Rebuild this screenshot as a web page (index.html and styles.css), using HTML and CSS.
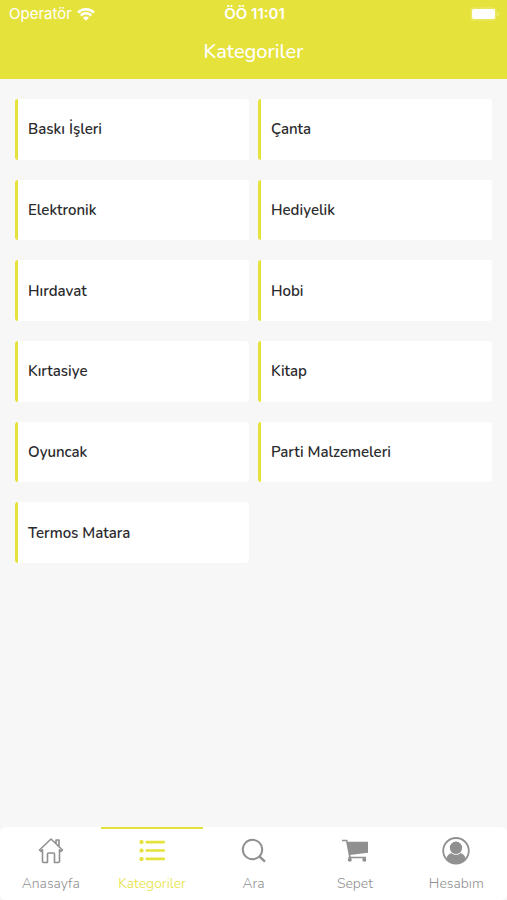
FILE: index.html
```html
<!DOCTYPE html>
<html lang="tr">
<head>
<meta charset="utf-8">
<meta name="viewport" content="width=device-width, initial-scale=1">
<title>Kategoriler</title>
<link rel="stylesheet" href="styles.css">
</head>
<body>
<header class="header">
  <div class="status">
    <div class="carrier">
      <span>Operatör</span>
      <svg class="wifi" viewBox="0 0 18 13" aria-hidden="true">
        <path d="M1 4.600a11.500 11.500 0 0 1 16 0M3.800 7.500a7.400 7.400 0 0 1 10.400 0" fill="none" stroke="currentColor" stroke-width="2.500"/>
        <path d="M9 12.800 5.900 9.800a4.400 4.400 0 0 1 6.200 0z" fill="currentColor"/>
      </svg>
    </div>
    <span class="clock">ÖÖ 11:01</span>
    <svg class="battery" viewBox="0 0 30 14" aria-hidden="true">
      <rect x="1" y="1" width="25" height="12" rx="3" fill="none" stroke="#fff" stroke-opacity=".3"/>
      <rect x="2" y="2" width="23" height="10" rx="2" fill="#fff"/>
      <path d="M27.500 5v4q1.500-.7 1.500-2t-1.500-2z" fill="#fff" fill-opacity=".4"/>
    </svg>
  </div>
  <h1 class="title">Kategoriler</h1>
</header>
<main class="grid">
  <a class="card" href="#">Baskı İşleri</a>
  <a class="card" href="#">Çanta</a>
  <a class="card" href="#">Elektronik</a>
  <a class="card" href="#">Hediyelik</a>
  <a class="card" href="#">Hırdavat</a>
  <a class="card" href="#">Hobi</a>
  <a class="card" href="#">Kırtasiye</a>
  <a class="card" href="#">Kitap</a>
  <a class="card" href="#">Oyuncak</a>
  <a class="card" href="#">Parti Malzemeleri</a>
  <a class="card" href="#">Termos Matara</a>
</main>
<nav class="tabs">
  <a class="tab" href="#">
    <svg class="icon" viewBox="0 0 28 28" fill="none" stroke="currentColor" stroke-width="1.600" stroke-linejoin="round" stroke-linecap="round" aria-hidden="true">
      <path d="M2.500 13 14 2l11.500 11-1.300 1.300-1.700-1.500V24.500a1 1 0 0 1-1 1h-4V17a1 1 0 0 0-1-1h-5a1 1 0 0 0-1 1v8.500h-4a1 1 0 0 1-1-1V12.800l-1.700 1.500zM19 6.800V3h3v6.500"/>
    </svg>
    <span>Anasayfa</span>
  </a>
  <a class="tab active" href="#" aria-current="page">
    <svg class="icon" viewBox="0 0 28 28" fill="currentColor" aria-hidden="true">
      <rect x="1.500" y="3" width="4" height="4" rx="1.500"/><rect x="1.500" y="11.500" width="4" height="4" rx="1.500"/><rect x="1.500" y="20" width="4" height="4" rx="1.500"/>
      <rect x="7.500" y="3.800" width="19.500" height="2.600" rx="1"/><rect x="7.500" y="12.200" width="19.500" height="2.600" rx="1"/><rect x="7.500" y="20.600" width="19.500" height="2.600" rx="1"/>
    </svg>
    <span>Kategoriler</span>
  </a>
  <a class="tab" href="#">
    <svg class="icon" viewBox="0 0 28 28" fill="none" stroke="currentColor" stroke-width="2" aria-hidden="true">
      <circle cx="13.500" cy="12.500" r="9.700"/><path d="m20.300 19.300 5.700 5.300" stroke-width="2.400"/>
    </svg>
    <span>Ara</span>
  </a>
  <a class="tab" href="#">
    <svg class="icon" viewBox="0 0 28 28" fill="currentColor" aria-hidden="true">
      <path d="M6 4.800H27v11L8.500 18z"/>
      <path d="M1 3.500h4.700l3.300 17M7.500 20.500h17.500" fill="none" stroke="currentColor" stroke-width="1.600"/>
      <circle cx="8.800" cy="22.800" r="2"/><circle cx="23.300" cy="22.800" r="2"/>
    </svg>
    <span>Sepet</span>
  </a>
  <a class="tab" href="#">
    <svg class="icon" viewBox="0 0 28 28" aria-hidden="true">
      <circle cx="14" cy="13.800" r="12.800" fill="none" stroke="currentColor" stroke-width="1.800"/>
      <circle cx="14" cy="10.800" r="6.200" fill="currentColor"/>
      <path d="M4.500 21.500q1-4.500 5-5.200 4.500 3 9 0 4 .7 5 5.200Q20 26.800 14 26.800T4.500 21.500z" fill="currentColor"/>
    </svg>
    <span>Hesabım</span>
  </a>
</nav>
</body>
</html>
```
FILE: styles.css
```css
* {
  box-sizing: border-box;
}

body {
  margin: 0;
  min-height: 100vh;
  display: flex;
  flex-direction: column;
  background: #f7f7f7;
  color: #2b2b2e;
  font-family: Nunito, Lato, "Noto Sans", sans-serif;
}

a {
  color: inherit;
  text-decoration: none;
}

.header {
  background: #e6e23c;
  color: #fff;
  padding-bottom: 13px;
}

.status {
  display: grid;
  grid-template-columns: 1fr auto 1fr;
  align-items: center;
  height: 28px;
  padding: 0 7px 0 9px;
  font: 15px/28px Inter, sans-serif;
}

.carrier {
  display: flex;
  align-items: center;
  gap: 5px;
}

.wifi {
  width: 18px;
  height: 13px;
}

.clock {
  font-weight: 600;
}

.battery {
  width: 30px;
  height: 14px;
  justify-self: end;
}

.title {
  margin: 0;
  padding-top: 10px;
  font-size: 20px;
  line-height: 28px;
  font-weight: 500;
  text-align: center;
}

.grid {
  flex: 1;
  display: grid;
  grid-template-columns: 1fr 1fr;
  align-content: start;
  gap: 20px 9px;
  padding: 20px 15px;
}

.card {
  display: flex;
  align-items: center;
  aspect-ratio: 27 / 7;
  padding: 0 10px;
  border-left: 3px solid #e6e23c;
  border-radius: 3px;
  background: #fff;
  font-size: 15px;
  font-weight: 600;
}

.tabs {
  display: grid;
  grid-template-columns: repeat(5, 1fr);
  background: #fff;
  border-radius: 6px;
}

.tab {
  display: flex;
  flex-direction: column;
  align-items: center;
  gap: 8px;
  padding: 8px 0 5px;
  border-top: 2px solid transparent;
  color: #909090;
  font-size: 14px;
  font-weight: 300;
  line-height: 22px;
}

.active {
  border-color: #e6e23c;
  color: #e6e23c;
}

.icon {
  width: 28px;
  height: 28px;
}
```
